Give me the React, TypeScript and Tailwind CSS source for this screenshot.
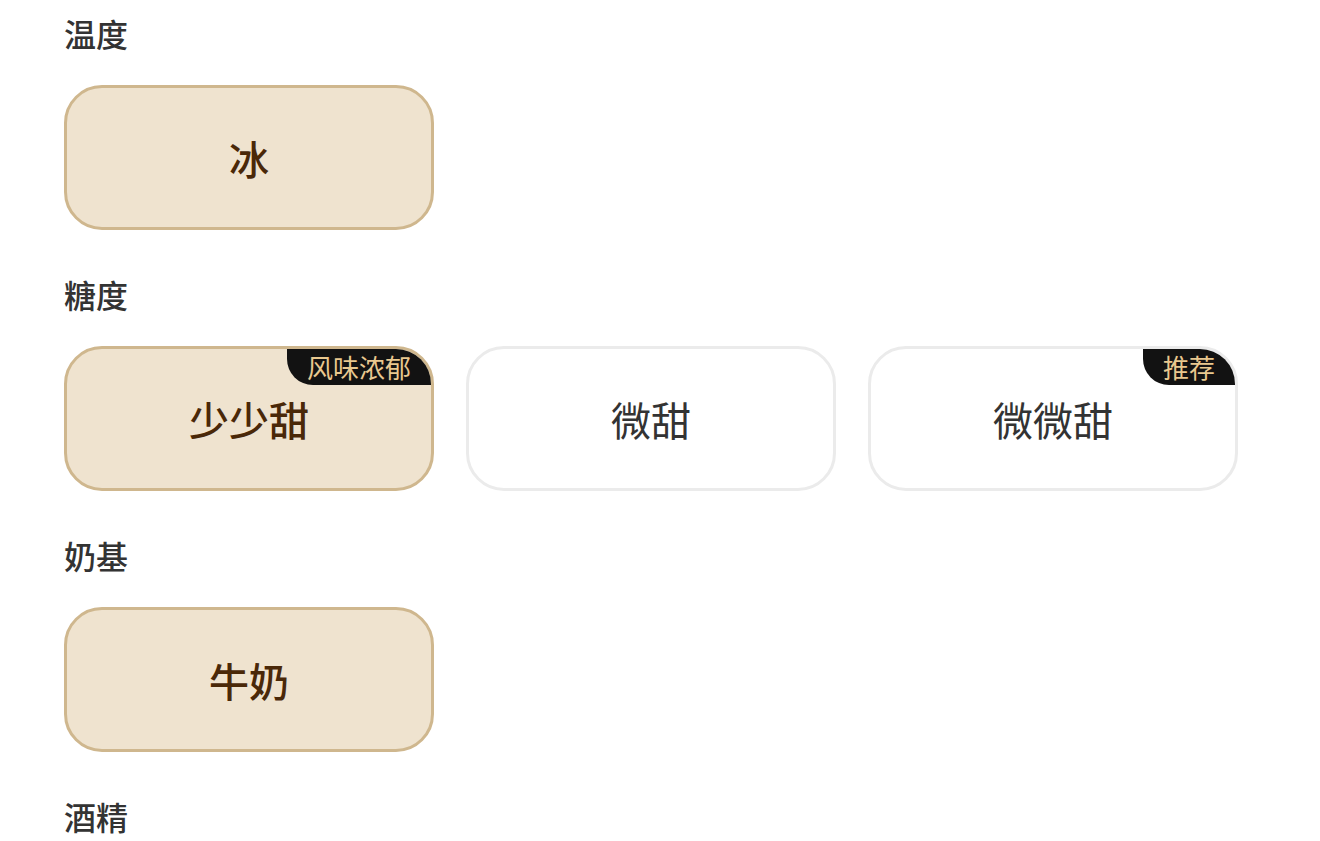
import React from "react";

type Option = { label: string; selected?: boolean; tag?: string };
type Group = { title: string; options: Option[] };

const groups: Group[] = [
  { title: "温度", options: [{ label: "冰", selected: true }] },
  {
    title: "糖度",
    options: [
      { label: "少少甜", selected: true, tag: "风味浓郁" },
      { label: "微甜" },
      { label: "微微甜", tag: "推荐" },
    ],
  },
  { title: "奶基", options: [{ label: "牛奶", selected: true }] },
  { title: "酒精", options: [] },
];

function OptionButton({ option }: { option: Option }) {
  return (
    <button
      className={`relative overflow-hidden w-[370px] h-[145px] rounded-[38px] border-[3px] flex items-center justify-center text-[40px] leading-none ${
        option.selected
          ? "bg-[#efe3cf] border-[#cfb78e] text-[#4a2808] font-medium"
          : "bg-white border-[#ebebeb] text-[#333333]"
      }`}
    >
      {/* corner tag */}
      {option.tag && (
        <span className="absolute top-0 right-0 h-[36px] px-[20px] flex items-center bg-[#121212] text-[#e9c88f] text-[26px] font-normal leading-none rounded-bl-[26px]">
          {option.tag}
        </span>
      )}
      <span>{option.label}</span>
    </button>
  );
}

export default function App() {
  return (
    <div
      className="h-[841px] overflow-hidden bg-white pl-[64px] pt-[11px]"
      style={{ fontFamily: '"Noto Sans CJK SC", "Noto Sans", sans-serif' }}
    >
      {groups.map((group) => (
        <section key={group.title} className="mb-[42px]">
          <h2 className="text-[32px] leading-[44px] font-medium text-[#333333]">
            {group.title}
          </h2>
          {group.options.length > 0 && (
            <div className="mt-[30px] flex gap-[32px]">
              {group.options.map((option) => (
                <OptionButton key={option.label} option={option} />
              ))}
            </div>
          )}
        </section>
      ))}
    </div>
  );
}
